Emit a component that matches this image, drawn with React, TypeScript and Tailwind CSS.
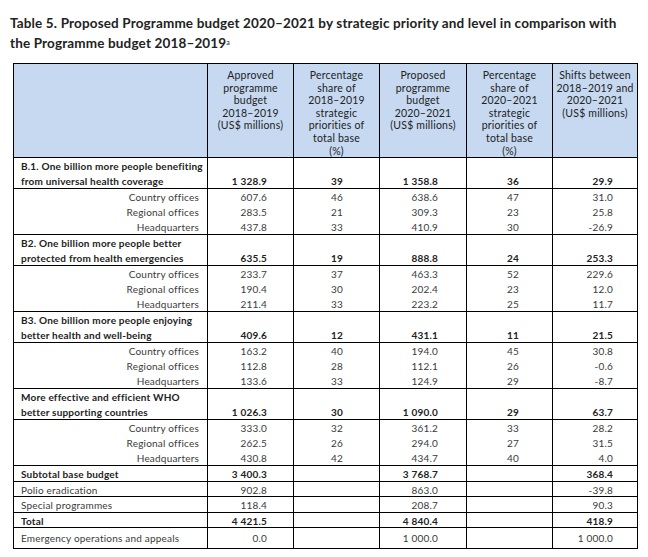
import { Fragment } from "react";

const groups = [
  {
    label: ["B.1. One billion more people benefiting", "from universal health coverage"],
    totals: ["1 328.9", "39", "1 358.8", "36", "29.9"],
    subs: [
      ["Country offices", "607.6", "46", "638.6", "47", "31.0"],
      ["Regional offices", "283.5", "21", "309.3", "23", "25.8"],
      ["Headquarters", "437.8", "33", "410.9", "30", "-26.9"],
    ],
  },
  {
    label: ["B2. One billion more people better", "protected from health emergencies"],
    totals: ["635.5", "19", "888.8", "24", "253.3"],
    subs: [
      ["Country offices", "233.7", "37", "463.3", "52", "229.6"],
      ["Regional offices", "190.4", "30", "202.4", "23", "12.0"],
      ["Headquarters", "211.4", "33", "223.2", "25", "11.7"],
    ],
  },
  {
    label: ["B3. One billion more people enjoying", "better health and well-being"],
    totals: ["409.6", "12", "431.1", "11", "21.5"],
    subs: [
      ["Country offices", "163.2", "40", "194.0", "45", "30.8"],
      ["Regional offices", "112.8", "28", "112.1", "26", "-0.6"],
      ["Headquarters", "133.6", "33", "124.9", "29", "-8.7"],
    ],
  },
  {
    label: ["More effective and efficient WHO", "better supporting countries"],
    totals: ["1 026.3", "30", "1 090.0", "29", "63.7"],
    subs: [
      ["Country offices", "333.0", "32", "361.2", "33", "28.2"],
      ["Regional offices", "262.5", "26", "294.0", "27", "31.5"],
      ["Headquarters", "430.8", "42", "434.7", "40", "4.0"],
    ],
  },
];

const summary = [
  { label: "Subtotal base budget", vals: ["3 400.3", "", "3 768.7", "", "368.4"], bold: true },
  { label: "Polio eradication", vals: ["902.8", "", "863.0", "", "-39.8"], bold: false },
  { label: "Special programmes", vals: ["118.4", "", "208.7", "", "90.3"], bold: false },
  { label: "Total", vals: ["4 421.5", "", "4 840.4", "", "418.9"], bold: true },
  { label: "Emergency operations and appeals", vals: ["0.0", "", "1 000.0", "", "1 000.0"], bold: false },
];

const headers = [
  ["Approved", "programme", "budget", "2018–2019", "(US$ millions)"],
  ["Percentage", "share of", "2018–2019", "strategic", "priorities of", "total base", "(%)"],
  ["Proposed", "programme", "budget", "2020–2021", "(US$ millions)"],
  ["Percentage", "share of", "2020–2021", "strategic", "priorities of", "total base", "(%)"],
  ["Shifts between", "2018–2019 and", "2020–2021", "(US$ millions)"],
];

// per value column: alignment + padding so numbers land where the original has them
const valCls = [
  "text-right pr-[26px]",
  "text-left pl-[37px]",
  "text-right pr-[28px]",
  "text-left pl-[40px]",
  "text-right pr-[24px]",
];

const cell = "border-x border-black align-bottom p-0";

const App = () => {
  return (
    <div className="w-[648px] h-[557px] bg-white text-[#3a3a3a] font-['Lato','Open_Sans',sans-serif]">
      <div className="pl-[10px] pt-[13px] text-[13.5px] font-bold leading-[20px] text-[#222] tracking-[0.15px]">
        <p>Table 5. Proposed Programme budget 2020–2021 by strategic priority and level in comparison with</p>
        <p>
          the Programme budget 2018–2019<sup className="text-[7px] font-normal">a</sup>
        </p>
      </div>

      <table className="ml-[13px] mt-[10px] w-[624px] table-fixed border-collapse border border-black text-[10px] tracking-[0.2px]">
        <colgroup>
          <col className="w-[194px]" />
          <col className="w-[86px]" />
          <col className="w-[86px]" />
          <col className="w-[87px]" />
          <col className="w-[86px]" />
          <col className="w-[85px]" />
        </colgroup>
        <thead>
          <tr className="h-[93px] bg-[#c6d9f1] border-b border-black">
            <th className="border-x border-black" />
            {headers.map((lines, i) => (
              <th key={i} className="border-x border-black align-top pt-[5px] font-normal text-center leading-[12.6px] text-[#222] text-[10.5px]">
                {lines.map((l) => (
                  <div key={l}>{l}</div>
                ))}
              </th>
            ))}
          </tr>
        </thead>
        <tbody className="leading-[14px]">
          {groups.map((g) => (
            <Fragment key={g.label[0]}>
              <tr className="border-b border-black">
                <td className={`${cell} pl-[7px] font-bold text-[#222]`}>
                  <div className="h-[15px] pt-[1px]">{g.label[0]}</div>
                  <div className="h-[15px] pt-[1px]">{g.label[1]}</div>
                </td>
                {g.totals.map((v, i) => (
                  <td key={i} className={`${cell} ${valCls[i]} font-bold text-[#222]`}>
                    <div className="h-[15px] pt-[1px]">{v}</div>
                  </td>
                ))}
              </tr>
              <tr className="border-b border-black">
                <td className={`${cell} text-right pr-[8px]`}>
                  {g.subs.map((s) => (
                    <div key={s[0]} className="h-[15px] pt-[1px]">{s[0]}</div>
                  ))}
                </td>
                {[1, 2, 3, 4, 5].map((c) => (
                  <td key={c} className={`${cell} ${valCls[c - 1]}`}>
                    {g.subs.map((s) => (
                      <div key={s[0]} className="h-[15px] pt-[1px]">{s[c]}</div>
                    ))}
                  </td>
                ))}
              </tr>
            </Fragment>
          ))}
          {summary.map((r, idx) => (
            <tr key={r.label} className={`border-b border-black ${r.bold ? "font-bold text-[#222]" : ""}`}>
              <td className={`${cell} align-middle pl-[7px]`}>
                <div className={idx === summary.length - 1 ? "h-[20px] pt-[3px]" : "h-[14.5px] pt-[1px]"}>{r.label}</div>
              </td>
              {r.vals.map((v, i) => (
                <td key={i} className={`${cell} align-middle ${valCls[i]}`}>
                  <div className={idx === summary.length - 1 ? "h-[20px] pt-[3px]" : "h-[14.5px] pt-[1px]"}>{v}</div>
                </td>
              ))}
            </tr>
          ))}
        </tbody>
      </table>
    </div>
  );
};

export default App;
